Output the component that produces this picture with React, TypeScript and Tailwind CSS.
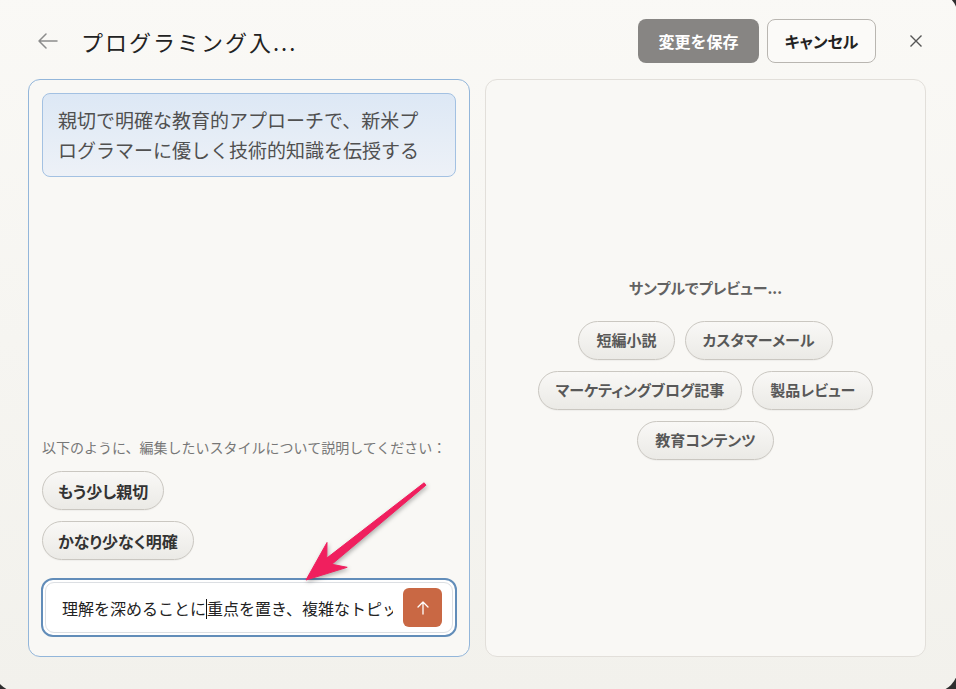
import React from "react";

const F = { fontFamily: '"Noto Sans CJK JP", "Noto Sans", sans-serif' };

function Chip({ label, dark }: { label: string; dark?: boolean }) {
  return (
    <div
      className={`flex h-[39px] items-center rounded-full border border-[#cac7c1] bg-gradient-to-b from-[#f9f8f6] to-[#ebeae6] font-bold shadow-[0_1px_1px_rgba(0,0,0,0.04)] [font-feature-settings:'palt'] ${
        dark ? "px-[15px] text-[16px] text-[#333]" : "px-[17px] text-[15px] text-[#585858]"
      }`}
    >
      {label}
    </div>
  );
}

export default function App() {
  return (
    <div className="relative h-[689px] w-[956px] overflow-hidden bg-[#2e2e2e]" style={F}>
      <div className="ml-[-6px] mt-[-8px] flex h-[700px] w-[964px] flex-col rounded-[24px] bg-gradient-to-b from-[#faf9f6] to-[#f2f1ec] pl-[34px] pr-[32px]">
        {/* Header */}
        <div className="mt-[27px] flex h-[44px] items-center">
          <svg className="ml-[10px]" width="20" height="16" viewBox="0 0 20 16" fill="none">
            <path d="M1 8H19M8 1L1 8L8 15" stroke="#8c8c8c" strokeWidth="1.5" strokeLinecap="round" strokeLinejoin="round" />
          </svg>
          <div className="ml-[23px] text-[22px] tracking-[2px] text-[#222]">プログラミング入...</div>
          <div className="ml-auto flex items-center gap-[8px]">
            <div className="flex h-[44px] w-[121px] items-center justify-center rounded-[8px] bg-[#878583] text-[16px] font-bold text-white">
              変更を保存
            </div>
            <div className="flex h-[44px] w-[109px] items-center justify-center rounded-[8px] border border-[#b9b6b1] bg-[#fbfaf8] text-[16px] font-bold text-[#222] [font-feature-settings:'palt']">
              キャンセル
            </div>
          </div>
          <svg className="ml-[34px] mr-[4px]" width="12" height="12" viewBox="0 0 12 12" fill="none">
            <path d="M0.5 0.5L11.5 11.5M11.5 0.5L0.5 11.5" stroke="#555" strokeWidth="1.4" />
          </svg>
        </div>

        {/* Panels */}
        <div className="mt-[16px] grid h-[578px] grid-cols-[442px_441px] gap-[15px]">
          {/* Left panel */}
          <div className="flex flex-col justify-between rounded-[12px] border border-[#93b6da] bg-[#f9f8f5] px-[13px] pb-[19px] pt-[13px]">
            <div className="rounded-[8px] border border-[#a3c1e2] bg-gradient-to-b from-[#dde8f5] to-[#edf1f7] pb-[11px] pl-[15px] pr-[28px] pt-[11px] text-[19px] leading-[30px] text-[#505050]">
              親切で明確な教育的アプローチで、新米プログラマーに優しく技術的知識を伝授する
            </div>
            <div className="flex flex-col">
              <div className="text-[14px] leading-[22px] text-[#777]">
                以下のように、編集したいスタイルについて説明してください：
              </div>
              <div className="mt-[13px] flex flex-col items-start gap-[11px]">
                <Chip label="もう少し親切" dark />
                <Chip label="かなり少なく明確" dark />
              </div>
              <div className="mx-[-1px] mt-[18px] h-[59px] rounded-[12px] border-2 border-[#628db9] bg-white p-[2px]">
                <div className="flex h-full items-center rounded-[9px] border border-[#dcdfe3] pl-[16px] pr-[10px]">
                  <div className="min-w-0 flex-1 overflow-hidden whitespace-nowrap text-[16px] text-[#222]">
                    理解を深めることに
                    <span className="inline-block h-[20px] w-[1px] translate-y-[4px] bg-[#111]" />
                    重点を置き、複雑なトピッ
                  </div>
                  <div className="ml-[10px] flex h-[39px] w-[39px] shrink-0 items-center justify-center rounded-[6px] bg-[#c96844]">
                    <svg width="12" height="14" viewBox="0 0 12 14" fill="none">
                      <path d="M6 13V1M1 6L6 1L11 6" stroke="#fff" strokeWidth="1.3" strokeLinecap="round" strokeLinejoin="round" />
                    </svg>
                  </div>
                </div>
              </div>
            </div>
          </div>

          {/* Right panel */}
          <div className="flex flex-col items-center justify-center rounded-[12px] border border-[#e2dfda] bg-[#f9f8f5]">
            <div className="text-[15px] font-bold leading-[22px] text-[#626262] [font-feature-settings:'palt']">
              サンプルでプレビュー...
            </div>
            <div className="mt-[22px] flex flex-col items-center gap-[11px]">
              <div className="flex gap-[10px]">
                <Chip label="短編小説" />
                <Chip label="カスタマーメール" />
              </div>
              <div className="flex gap-[10px]">
                <Chip label="マーケティングブログ記事" />
                <Chip label="製品レビュー" />
              </div>
              <div className="flex gap-[10px]">
                <Chip label="教育コンテンツ" />
              </div>
            </div>
          </div>
        </div>
      </div>

      {/* Annotation arrow */}
      <svg
        className="pointer-events-none absolute left-0 top-0"
        width="956"
        height="689"
        viewBox="0 0 956 689"
        style={{ filter: "drop-shadow(1px 2px 2px rgba(0,0,0,0.3))" }}
      >
        <polygon
          points="425.9,485.2 331.8,564.3 347.2,567.3 306,580 327.0,542.5 326.8,558.1 424.1,482.8"
          fill="#f01f5e"
          stroke="#f01f5e"
          strokeWidth="1"
          strokeLinejoin="round"
        />
      </svg>
    </div>
  );
}
